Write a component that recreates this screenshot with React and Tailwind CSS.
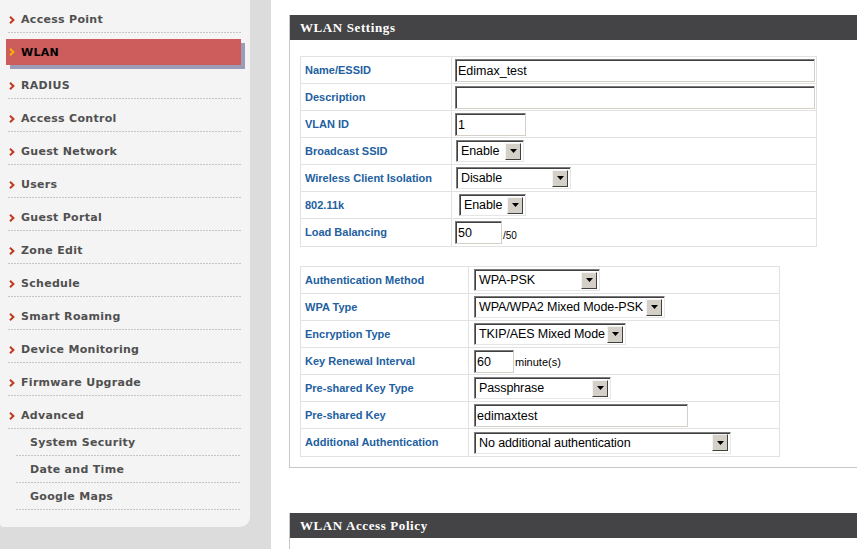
import React from 'react';

const menu = [
  'Access Point',
  'WLAN',
  'RADIUS',
  'Access Control',
  'Guest Network',
  'Users',
  'Guest Portal',
  'Zone Edit',
  'Schedule',
  'Smart Roaming',
  'Device Monitoring',
  'Firmware Upgrade',
  'Advanced'
];

const subMenu = ['System Security', 'Date and Time', 'Google Maps'];

const Chevron = ({ color }) => (
  <svg width="6" height="8" viewBox="0 0 6 8" className="shrink-0">
    <path d="M1 0.8 L4.4 4 L1 7.2" stroke={color} strokeWidth="2" fill="none" />
  </svg>
);

const Dots = ({ className }) => (
  <div className={`h-px bg-[repeating-linear-gradient(90deg,#c6c6c6_0_2px,transparent_2px_3px)] ${className}`} />
);

const Input = ({ className, value }) => (
  <div className={`h-[23px] bg-white border border-t-[#7b7b7b] border-l-[#7b7b7b] border-r-[#d4d0c8] border-b-[#d4d0c8] shadow-[inset_1px_1px_0_#404040] flex items-center pl-[2px] pt-[2px] text-[12.5px] text-black ${className}`}>
    {value}
  </div>
);

const Select = ({ className, value }) => (
  <div className={`h-[22px] bg-white border border-t-[#7b7b7b] border-l-[#7b7b7b] border-r-[#e6e6e6] border-b-[#e6e6e6] shadow-[inset_1px_1px_0_#404040] flex items-center pl-[4px] pr-[2px] text-[12.5px] tracking-[-0.1px] text-black ${className}`}>
    <span className="flex-1 pt-[1px] whitespace-nowrap overflow-hidden">{value}</span>
    <span className="w-[16px] h-[17px] bg-[#d4d0c8] border border-t-[#f4f4f4] border-l-[#f4f4f4] border-r-[#404040] border-b-[#404040] flex items-center justify-center">
      <svg width="7" height="4" viewBox="0 0 7 4">
        <path d="M0 0h7L3.5 4z" fill="#000" />
      </svg>
    </span>
  </div>
);

const Row = ({ label, labelWidth, children }) => (
  <div className="flex h-[27px] border-b border-[#e2e2e2] last:border-b-0">
    <div className={`${labelWidth} shrink-0 border-r border-[#e2e2e2] flex items-center pl-[4px] text-[11px] font-bold text-[#22609f]`}>
      {label}
    </div>
    <div className="flex-1 flex items-center">{children}</div>
  </div>
);

const Sidebar = () => (
  <div className="w-[271px] shrink-0 bg-[#dcdcdc] h-full">
    <div className="w-[250px] h-[527px] bg-[#f4f4f4] rounded-br-[10px] rounded-bl-[4px] font-['DejaVu_Sans',sans-serif] text-[11px] font-bold text-[#505050] tracking-[0.3px]">
      {menu.map((item) =>
        item === 'WLAN' ? (
          <div key={item} className="h-[33px] pt-[6px]">
            <div className="ml-[6px] w-[235px] h-[26px] bg-[#cd5c5c] shadow-[4px_4px_0_#9d9cb8] flex items-center pl-[3px] text-black leading-[13px]">
              <Chevron color="#f6b300" />
              <span className="ml-[6px]">{item}</span>
            </div>
          </div>
        ) : (
          <div key={item} className="h-[33px]">
            <div className="ml-[9px] pt-[13px] h-[32px] flex items-start leading-[13px]">
              <span className="h-[13px] flex items-center">
                <Chevron color="#c0391f" />
              </span>
              <span className="ml-[6px]">{item}</span>
            </div>
            <Dots className="ml-[8px] w-[233px]" />
          </div>
        )
      )}
      {subMenu.map((item) => (
        <div key={item} className="h-[27px]">
          <div className="ml-[30px] pt-[7px] h-[26px] leading-[13px]">{item}</div>
          <Dots className="ml-[16px] w-[225px]" />
        </div>
      ))}
    </div>
  </div>
);

const PanelHeader = ({ title }) => (
  <div className="h-[25px] bg-[#444446] pl-[10px] flex items-center text-white font-bold text-[13px] tracking-[0.6px] font-['Liberation_Serif',serif]">
    {title}
  </div>
);

export default function App() {
  return (
    <div className="w-[857px] h-[549px] overflow-hidden flex bg-white font-['Liberation_Sans',Arial,sans-serif]">
      <Sidebar />
      <div className="flex-1 bg-white pl-[18px] pt-[15px] overflow-hidden">
        <div className="border-l border-b border-[#c8c8c8]">
          <PanelHeader title="WLAN Settings" />
          <div className="pl-[10px] pt-[16px] pb-[10px]">
            <div className="w-[517px] border border-[#e2e2e2]">
              <Row label="Name/ESSID" labelWidth="w-[151px]">
                <Input className="ml-[3px] w-[360px]" value="Edimax_test" />
              </Row>
              <Row label="Description" labelWidth="w-[151px]">
                <Input className="ml-[3px] w-[360px]" value="" />
              </Row>
              <Row label="VLAN ID" labelWidth="w-[151px]">
                <Input className="ml-[3px] w-[71px]" value="1" />
              </Row>
              <Row label="Broadcast SSID" labelWidth="w-[151px]">
                <Select className="ml-[4px] w-[68px]" value="Enable" />
              </Row>
              <Row label="Wireless Client Isolation" labelWidth="w-[151px]">
                <Select className="ml-[4px] w-[115px]" value="Disable" />
              </Row>
              <Row label="802.11k" labelWidth="w-[151px]">
                <Select className="ml-[7px] w-[67px]" value="Enable" />
              </Row>
              <Row label="Load Balancing" labelWidth="w-[151px]">
                <Input className="ml-[3px] w-[47px]" value="50" />
                <span className="ml-[1px] mt-[5px] text-[10px] text-black">/50</span>
              </Row>
            </div>

            <div className="mt-[19px] w-[480px] border border-[#e2e2e2]">
              <Row label="Authentication Method" labelWidth="w-[168px]">
                <Select className="ml-[5px] w-[126px]" value="WPA-PSK" />
              </Row>
              <Row label="WPA Type" labelWidth="w-[168px]">
                <Select className="ml-[5px] w-[191px]" value="WPA/WPA2 Mixed Mode-PSK" />
              </Row>
              <Row label="Encryption Type" labelWidth="w-[168px]">
                <Select className="ml-[5px] w-[152px]" value="TKIP/AES Mixed Mode" />
              </Row>
              <Row label="Key Renewal Interval" labelWidth="w-[168px]">
                <Input className="ml-[5px] w-[40px]" value="60" />
                <span className="ml-[1px] mt-[3px] text-[11px] text-black">minute(s)</span>
              </Row>
              <Row label="Pre-shared Key Type" labelWidth="w-[168px]">
                <Select className="ml-[5px] w-[137px]" value="Passphrase" />
              </Row>
              <Row label="Pre-shared Key" labelWidth="w-[168px]">
                <Input className="ml-[5px] w-[214px]" value="edimaxtest" />
              </Row>
              <Row label="Additional Authentication" labelWidth="w-[168px]">
                <Select className="ml-[5px] w-[257px]" value="No additional authentication" />
              </Row>
            </div>
          </div>
        </div>

        <div className="mt-[45px] border-l border-[#c8c8c8] h-[60px]">
          <PanelHeader title="WLAN Access Policy" />
        </div>
      </div>
    </div>
  );
}
